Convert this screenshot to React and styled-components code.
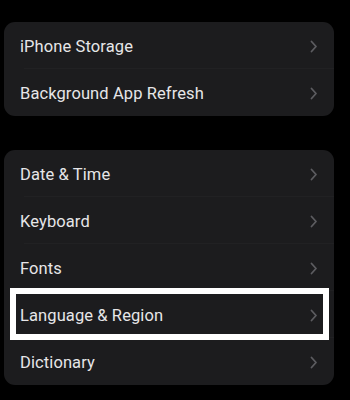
import React from 'react';
import styled, { createGlobalStyle } from 'styled-components';

const GlobalStyle = createGlobalStyle`
  html, body {
    margin: 0;
    padding: 0;
    background: #000;
  }
  body {
    font-family: Roboto, "Liberation Sans", sans-serif;
    -webkit-font-smoothing: antialiased;
  }
`;

const Page = styled.div`
  width: 350px;
  height: 400px;
  background: #000;
  padding: 22px 16px 0 4px;
  box-sizing: border-box;
  display: flex;
  flex-direction: column;
  gap: 34px;
  overflow: hidden;
`;

const Group = styled.div`
  background: #1c1c1e;
  border-radius: 11px;
  width: 330px;
`;

const Row = styled.div`
  position: relative;
  height: 47px;
  display: flex;
  align-items: center;
  padding: 1px 16px 0 16px;
  box-sizing: border-box;
  &:not(:last-child)::after {
    content: '';
    position: absolute;
    left: 20px;
    right: 0;
    bottom: 0;
    height: 1px;
    background: #212123;
  }
`;

const Label = styled.span`
  flex: 1;
  color: #e6e6e8;
  font-size: 16.5px;
  letter-spacing: 0.1px;
`;

const Highlight = styled.div`
  position: absolute;
  left: 6px;
  right: 5px;
  top: -3px;
  bottom: -2px;
  border: 6px solid #fff;
  pointer-events: none;
  z-index: 2;
`;

const Chevron = () => (
  <svg width="8" height="13" viewBox="0 0 8 13" fill="none">
    <path d="M1.5 1.5 L6 6.5 L1.5 11.5" stroke="#5c5c60" strokeWidth="1.8" strokeLinecap="round" strokeLinejoin="round" />
  </svg>
);

const Item = ({ label, highlighted }) => (
  <Row>
    <Label>{label}</Label>
    <Chevron />
    {highlighted && <Highlight />}
  </Row>
);

export default function App() {
  return (
    <>
      <GlobalStyle />
      <Page>
        <Group>
          <Item label="iPhone Storage" />
          <Item label="Background App Refresh" />
        </Group>
        <Group>
          <Item label="Date & Time" />
          <Item label="Keyboard" />
          <Item label="Fonts" />
          <Item label="Language & Region" highlighted />
          <Item label="Dictionary" />
        </Group>
      </Page>
    </>
  );
}
